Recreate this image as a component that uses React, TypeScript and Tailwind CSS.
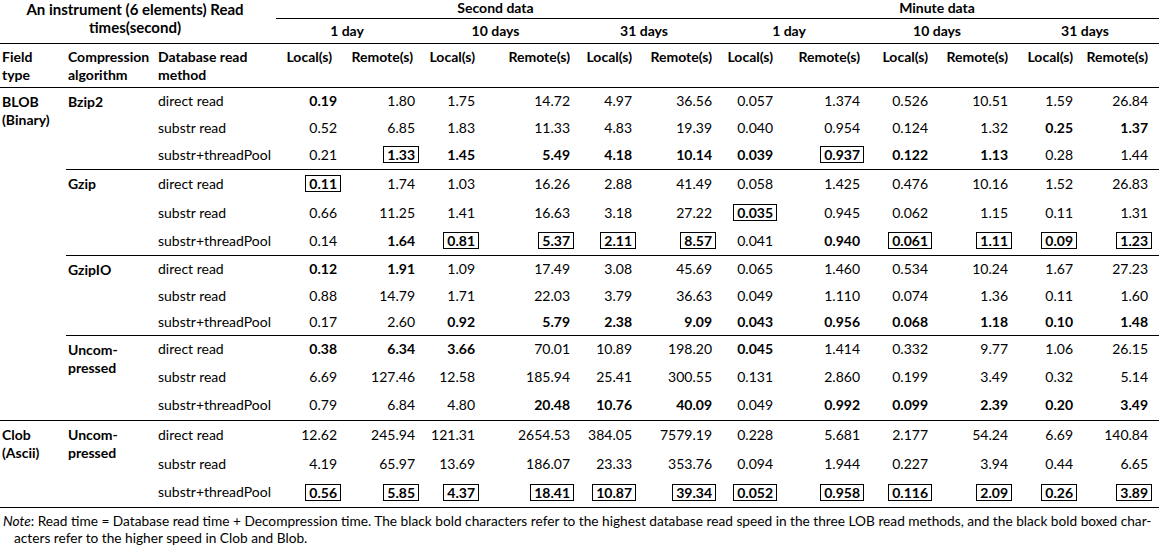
import React from "react";

// value suffix: "b" = bold, "x" = bold + boxed
const groups = [
  {
    name: ["Bzip2"],
    heights: ["h-[27px]", "h-[27px]", "h-[28px]"],
    rows: [
      ["0.19b", "1.80", "1.75", "14.72", "4.97", "36.56", "0.057", "1.374", "0.526", "10.51", "1.59", "26.84"],
      ["0.52", "6.85", "1.83", "11.33", "4.83", "19.39", "0.040", "0.954", "0.124", "1.32", "0.25b", "1.37b"],
      ["0.21", "1.33x", "1.45b", "5.49b", "4.18b", "10.14b", "0.039b", "0.937x", "0.122b", "1.13b", "0.28", "1.44"],
    ],
  },
  {
    name: ["Gzip"],
    heights: ["h-[29px]", "h-[29px]", "h-[28px]"],
    rows: [
      ["0.11x", "1.74", "1.03", "16.26", "2.88", "41.49", "0.058", "1.425", "0.476", "10.16", "1.52", "26.83"],
      ["0.66", "11.25", "1.41", "16.63", "3.18", "27.22", "0.035x", "0.945", "0.062", "1.15", "0.11", "1.31"],
      ["0.14", "1.64b", "0.81x", "5.37x", "2.11x", "8.57x", "0.041", "0.940b", "0.061x", "1.11x", "0.09x", "1.23x"],
    ],
  },
  {
    name: ["GzipIO"],
    heights: ["h-[27px]", "h-[27px]", "h-[26px]"],
    rows: [
      ["0.12b", "1.91b", "1.09", "17.49", "3.08", "45.69", "0.065", "1.460", "0.534", "10.24", "1.67", "27.23"],
      ["0.88", "14.79", "1.71", "22.03", "3.79", "36.63", "0.049", "1.110", "0.074", "1.36", "0.11", "1.60"],
      ["0.17", "2.60", "0.92b", "5.79b", "2.38b", "9.09b", "0.043b", "0.956b", "0.068b", "1.18b", "0.10b", "1.48b"],
    ],
  },
  {
    name: ["Uncom-", "pressed"],
    heights: ["h-[28px]", "h-[28px]", "h-[29px]"],
    rows: [
      ["0.38b", "6.34b", "3.66b", "70.01", "10.89", "198.20", "0.045b", "1.414", "0.332", "9.77", "1.06", "26.15"],
      ["6.69", "127.46", "12.58", "185.94", "25.41", "300.55", "0.131", "2.860", "0.199", "3.49", "0.32", "5.14"],
      ["0.79", "6.84", "4.80", "20.48b", "10.76b", "40.09b", "0.049", "0.992b", "0.099b", "2.39b", "0.20b", "3.49b"],
    ],
  },
];

const clob = {
  name: ["Uncom-", "pressed"],
  heights: ["h-[29px]", "h-[29px]", "h-[29px]"],
  rows: [
    ["12.62", "245.94", "121.31", "2654.53", "384.05", "7579.19", "0.228", "5.681", "2.177", "54.24", "6.69", "140.84"],
    ["4.19", "65.97", "13.69", "186.07", "23.33", "353.76", "0.094", "1.944", "0.227", "3.94", "0.44", "6.65"],
    ["0.56x", "5.85x", "4.37x", "18.41x", "10.87x", "39.34x", "0.052x", "0.958x", "0.116x", "2.09x", "0.26x", "3.89x"],
  ],
};

const methods = ["direct read", "substr read", "substr+threadPool"];
const widths = ["w-[66px]", "w-[90px]", "w-[120px]", "w-[64px]", "w-[78px]", "w-[60px]", "w-[95px]", "w-[62px]", "w-[80px]", "w-[61px]", "w-[87px]", "w-[68px]", "w-[80px]", "w-[65px]", "w-[83px]"];
const valuePad = ["pr-[3px]", "pr-[3px]", "pr-[3px]", "pr-[3px]", "pr-[3px]", "pr-[3px]", "pr-[3px]", "pr-[3px]", "pr-[3px]", "pr-[3px]", "pr-[3px]", "pr-[11px]"];
const headPad = ["pr-[8px]", "pr-[5px]", "pr-[3px]", "pr-[3px]", "pr-[3px]", "pr-[3px]", "pr-[3px]", "pr-[3px]", "pr-[3px]", "pr-[3px]", "pr-[3px]", "pr-[11px]"];

const Value = ({ v }: { v: string }) => {
  if (v.endsWith("x")) {
    return (
      <span className="inline-block border border-black px-[3px] -mr-[4px] leading-[15px] font-bold">
        {v.slice(0, -1)}
      </span>
    );
  }
  if (v.endsWith("b")) return <span className="font-bold">{v.slice(0, -1)}</span>;
  return <span>{v}</span>;
};

type Group = { name: string[]; heights: string[]; rows: string[][] };

const GroupRows = ({ g, field, fieldSpan }: { g: Group; field?: string[]; fieldSpan?: number }) => (
  <>
    {g.rows.map((r, i) => {
      const last = i === g.rows.length - 1;
      const line = last ? "border-b border-black" : "";
      return (
        <tr key={i} className={g.heights[i]}>
          {i === 0 && field && (
            <td rowSpan={fieldSpan} className="align-top pt-[5px] pl-[2px] font-bold leading-[18px] border-b border-black">
              {field.map((f) => (
                <div key={f}>{f}</div>
              ))}
            </td>
          )}
          {i === 0 && (
            <td rowSpan={3} className="align-top pt-[5px] pl-[2px] font-bold leading-[18px] border-b border-black">
              {g.name.map((n) => (
                <div key={n}>{n}</div>
              ))}
            </td>
          )}
          <td className={`pl-[2px] whitespace-nowrap ${line}`}>{methods[i]}</td>
          {r.map((v, j) => (
            <td key={j} className={`text-right whitespace-nowrap ${valuePad[j]} ${line}`}>
              <Value v={v} />
            </td>
          ))}
        </tr>
      );
    })}
  </>
);

export default function App() {
  const subHeads = ["1 day", "10 days", "31 days"];
  return (
    <div className="w-[1159px] h-[545px] bg-white text-black text-[14px] font-['Lato','Open_Sans',sans-serif] overflow-hidden">
      <table className="table-fixed border-collapse w-[1159px] leading-[16px]">
        <colgroup>
          {widths.map((w, i) => (
            <col key={i} className={w} />
          ))}
        </colgroup>
        <thead className="font-bold">
          <tr className="h-[18px]">
            <th colSpan={3} rowSpan={2} className="align-top text-center text-[15px] font-bold leading-[18px] border-b border-black pr-[6px]">
              An instrument (6 elements) Read
              <br />
              times(second)
            </th>
            <th colSpan={6} className="text-center border-b border-black font-bold align-top">
              Second data
            </th>
            <th colSpan={6} className="text-center border-b border-black font-bold align-top">
              Minute data
            </th>
          </tr>
          <tr className="h-[25px]">
            {[0, 1].flatMap((k) =>
              subHeads.map((s) => (
                <th key={`${k}${s}`} colSpan={2} className="text-center border-b border-black font-bold">
                  {s}
                </th>
              ))
            )}
          </tr>
          <tr className="h-[44px]">
            <th className="align-top text-left pt-[4px] pl-[2px] leading-[18px] border-b border-black font-bold">
              Field
              <br />
              type
            </th>
            <th className="align-top text-left pt-[4px] pl-[2px] leading-[18px] border-b border-black font-bold">
              Compression
              <br />
              algorithm
            </th>
            <th className="align-top text-left pt-[4px] pl-[2px] leading-[18px] border-b border-black font-bold">
              Database read
              <br />
              method
            </th>
            {headPad.map((p, j) => (
              <th key={j} className={`align-top text-right pt-[4px] leading-[18px] border-b border-black font-bold whitespace-nowrap ${p}`}>
                {j % 2 === 0 ? "Local(s)" : "Remote(s)"}
              </th>
            ))}
          </tr>
        </thead>
        <tbody>
          {groups.map((g, i) => (
            <GroupRows key={i} g={g} field={i === 0 ? ["BLOB", "(Binary)"] : undefined} fieldSpan={12} />
          ))}
          <GroupRows g={clob} field={["Clob", "(Ascii)"]} fieldSpan={3} />
        </tbody>
      </table>
      <div className="pt-[4px] leading-[17px] text-[13.7px]">
        <div className="pl-[3px] whitespace-nowrap">
          <i>Note</i>: Read time = Database read time + Decompression time. The black bold characters refer to the highest database read speed in the three LOB read methods, and the black bold boxed char-
        </div>
        <div className="pl-[14px]">acters refer to the higher speed in Clob and Blob.</div>
      </div>
    </div>
  );
}
